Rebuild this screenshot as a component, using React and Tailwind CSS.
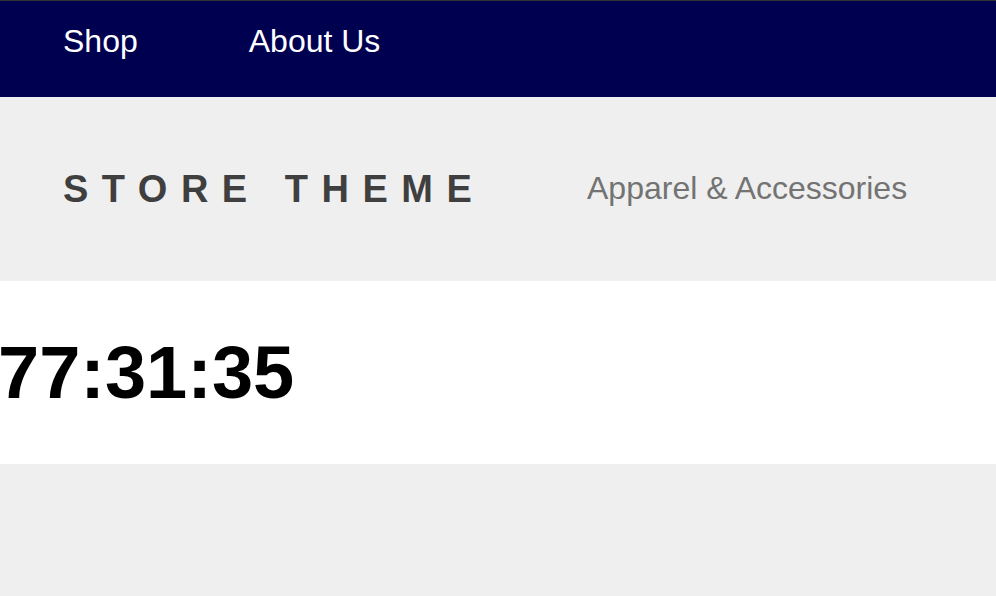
export default function App() {
  return (
    <div className="w-[996px] h-[596px] bg-[#efefef] overflow-hidden" style={{ fontFamily: '"Liberation Sans", Arial, sans-serif' }}>
      <nav className="h-[97px] bg-[#000050] border-t border-[#333333] flex items-start pt-[18px] pl-[63px] gap-[111px]">
        <a className="text-[32px] leading-[44px] text-white">Shop</a>
        <a className="text-[32px] leading-[44px] text-white">About Us</a>
      </nav>
      <header className="h-[184px] flex items-center pl-[63px]">
        <div className="text-[38px] font-bold tracking-[13.5px] text-[#3f3f3f] leading-none w-[524px] whitespace-nowrap">STORE THEME</div>
        <div className="text-[32px] text-[#737373] leading-none -mt-[2px]">Apparel &amp; Accessories</div>
      </header>
      <section className="h-[183px] bg-white flex items-center">
        <div className="text-[74px] font-bold text-black leading-none -ml-[2px] whitespace-nowrap">77:31:35</div>
      </section>
    </div>
  );
}
